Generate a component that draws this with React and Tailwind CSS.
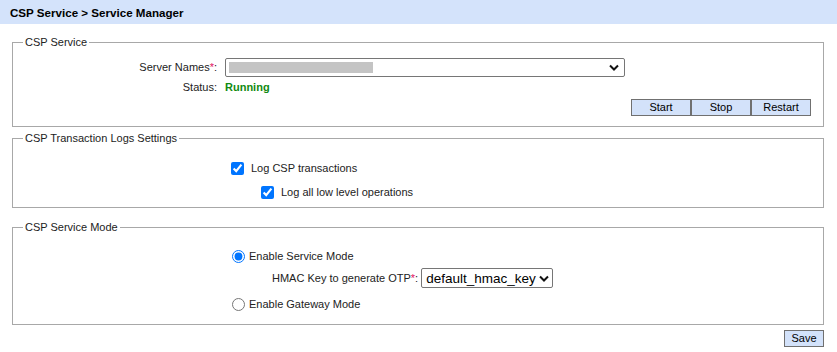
export default function App() {
  const btn =
    'h-[17px] w-[60px] border border-[#707070] bg-[#d3e2fa] text-[11px] leading-none text-black'

  return (
    <div className="w-[837px] h-[352px] bg-white text-[11px] leading-[15px] text-[#222] font-['Liberation_Sans',Arial,sans-serif]">
      {/* Title bar */}
      <div className="h-[24px] bg-[#d4e3fb] flex items-center pl-[10px] font-bold text-[11.6px] text-black">
        CSP Service &gt; Service Manager
      </div>

      <div className="pl-[12px] pr-[13px] pt-[11px]">
        {/* CSP Service */}
        <fieldset className="border border-[#a8a8a8] px-[12px] pb-[10px] pt-[8px]">
          <legend className="ml-[-2px] px-[2px]">CSP Service</legend>
          <div className="grid grid-cols-[192px_1fr] gap-x-[8px] gap-y-[3px] items-center">
            <div className="text-right">
              Server Names<span className="text-[#e0115f]">*</span>:
            </div>
            <div className="relative h-[19px] w-[400px] border border-[#767676] rounded-[2px] bg-white">
              <div className="absolute left-[3px] top-[3px] h-[11px] w-[144px] bg-[#c4c4c4]" />
              <svg className="absolute right-[5px] top-[5px]" width="10" height="7" viewBox="0 0 10 7">
                <path d="M1 1.5 L5 5.5 L9 1.5" fill="none" stroke="#111" strokeWidth="2" />
              </svg>
            </div>
            <div className="text-right">Status:</div>
            <div className="font-bold text-[#118a11]">Running</div>
          </div>
          <div className="flex justify-end mt-[4px]">
            <button className={btn}>Start</button>
            <button className={btn}>Stop</button>
            <button className={btn}>Restart</button>
          </div>
        </fieldset>

        {/* Logs */}
        <fieldset className="border border-[#a8a8a8] mt-[4px] pl-[218px] pb-[7px] pt-[15px]">
          <legend className="ml-[-208px] px-[2px]">CSP Transaction Logs Settings</legend>
          <label className="flex items-center gap-[7px]">
            <input type="checkbox" defaultChecked className="m-0 w-[13px] h-[13px] accent-[#0075ff]" />
            <span>Log CSP transactions</span>
          </label>
          <label className="flex items-center gap-[7px] ml-[30px] mt-[9px]">
            <input type="checkbox" defaultChecked className="m-0 w-[13px] h-[13px] accent-[#0075ff]" />
            <span>Log all low level operations</span>
          </label>
        </fieldset>

        {/* Mode */}
        <fieldset className="border border-[#a8a8a8] mt-[12px] pl-[219px] pb-[12px] pt-[14px]">
          <legend className="ml-[-209px] px-[2px]">CSP Service Mode</legend>
          <label className="flex items-center gap-[4px]">
            <input type="radio" name="mode" defaultChecked className="m-0 w-[13px] h-[13px] accent-[#0075ff]" />
            <span>Enable Service Mode</span>
          </label>
          <div className="flex items-center ml-[40px] mt-[4px]">
            <span>
              HMAC Key to generate OTP<span className="text-[#e0115f]">*</span>:
            </span>
            <div className="ml-[3px] h-[20px] w-[132px] border border-[#767676] rounded-[2px] flex items-center justify-between pl-[4px] pr-[3px] text-[13.5px] text-black">
              <span>default_hmac_key</span>
              <svg width="10" height="7" viewBox="0 0 10 7">
                <path d="M1 1.5 L5 5.5 L9 1.5" fill="none" stroke="#111" strokeWidth="2" />
              </svg>
            </div>
          </div>
          <label className="flex items-center gap-[4px] mt-[9px]">
            <input type="radio" name="mode" className="m-0 w-[13px] h-[13px] accent-[#0075ff]" />
            <span>Enable Gateway Mode</span>
          </label>
        </fieldset>

        <div className="flex justify-end mt-[5px]">
          <button className="h-[17px] w-[40px] border border-[#707070] bg-[#d3e2fa] text-[11px] leading-none text-black">
            Save
          </button>
        </div>
      </div>
    </div>
  )
}
